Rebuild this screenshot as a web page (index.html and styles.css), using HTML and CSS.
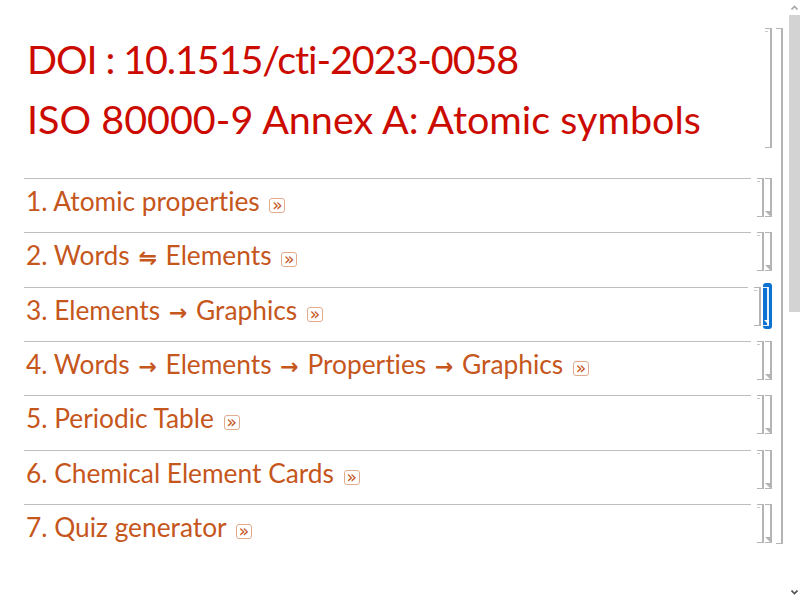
FILE: index.html
```html
<!DOCTYPE html>
<html lang="en">

<head>
  <meta charset="UTF-8" />
  <meta name="viewport" content="width=device-width, initial-scale=1.0" />
  <title>ISO 80000-9 Annex A: Atomic symbols</title>
  <link rel="stylesheet" href="styles.css">
</head>

<body>
  <div class="window">
    <div class="notebook">
      <div class="group">
        <div class="cells">

          <div class="cell title-cell">
            <div class="content">
              <div class="title doi">DOI : 10.1515/cti-2023-0058</div>
              <div class="title">ISO 80000-9 Annex A: Atomic symbols</div>
            </div>
            <span class="bracket-slot"></span>
            <span class="bracket cell-br"></span>
          </div>

          <div class="cell section">
            <div class="content">1. Atomic properties <span class="more">»</span></div>
            <span class="bracket cell-br"></span>
            <span class="bracket group-br"></span>
          </div>

          <div class="cell section">
            <div class="content">2. Words <span class="arrow">⇋</span> Elements <span class="more">»</span></div>
            <span class="bracket cell-br"></span>
            <span class="bracket group-br"></span>
          </div>

          <div class="cell section">
            <div class="content">3. Elements <span class="arrow">→</span> Graphics <span class="more">»</span></div>
            <span class="bracket cell-br"></span>
            <span class="bracket group-br selected"></span>
          </div>

          <div class="cell section">
            <div class="content">4. Words <span class="arrow">→</span> Elements <span class="arrow">→</span> Properties <span class="arrow">→</span> Graphics <span class="more">»</span></div>
            <span class="bracket cell-br"></span>
            <span class="bracket group-br"></span>
          </div>

          <div class="cell section">
            <div class="content">5. Periodic Table <span class="more">»</span></div>
            <span class="bracket cell-br"></span>
            <span class="bracket group-br"></span>
          </div>

          <div class="cell section">
            <div class="content">6. Chemical Element Cards <span class="more">»</span></div>
            <span class="bracket cell-br"></span>
            <span class="bracket group-br"></span>
          </div>

          <div class="cell section">
            <div class="content">7. Quiz generator <span class="more">»</span></div>
            <span class="bracket cell-br"></span>
            <span class="bracket group-br"></span>
          </div>

        </div>
        <span class="bracket outer-br"></span>
      </div>
    </div>

    <div class="scrollbar">
      <div class="sb-button">
        <svg width="7" height="5" viewBox="0 0 7 5"><polyline points="0.5,4.5 3.5,1.5 6.5,4.5" fill="none" stroke="#a8a8a8" stroke-width="1.6" /></svg>
      </div>
      <div class="sb-thumb"></div>
      <div class="sb-track"></div>
      <div class="sb-button">
        <svg width="7" height="5" viewBox="0 0 7 5"><polyline points="0.5,0.5 3.5,3.5 6.5,0.5" fill="none" stroke="#505050" stroke-width="1.6" /></svg>
      </div>
    </div>
  </div>
</body>

</html>
```

FILE: styles.css
```css
html {
  background: #fff;
}

body {
  margin: 0;
}

.window {
  display: flex;
  height: 600px;
  overflow: hidden;
}

.notebook {
  flex: 1;
  padding: 28px 6px 0 24px;
  font-family: Lato, "Open Sans", sans-serif;
  font-variant-ligatures: none;
}

.group {
  display: flex;
}

.cells {
  flex: 1;
}

.cell {
  display: flex;
}

.content {
  flex: 1;
}

/* title */
.title-cell {
  height: 120px;
}

.title-cell .content {
  padding: 1px 0 0 3px;
}

.title {
  color: #cc0b00;
  font-size: 39.5px;
  line-height: 60px;
  white-space: nowrap;
}

.title.doi {
  letter-spacing: -1.1px;
}

/* sections */
.section {
  height: 39px;
  margin-top: 15.33px;
}

.title-cell + .section {
  margin-top: 30px;
}

.section .content {
  border-top: 1px solid #bdbdbd;
  color: #c5561c;
  font-size: 26.3px;
  line-height: 38px;
  padding: 3px 0 0 2px;
  white-space: nowrap;
}

.arrow {
  margin: 0 2px;
  font-family: "DejaVu Sans", sans-serif;
  font-size: 22px;
  font-weight: bold;
}

.more {
  display: inline-flex;
  align-items: center;
  justify-content: center;
  box-sizing: border-box;
  width: 16px;
  height: 15px;
  margin-left: 3px;
  border: 1px solid #e3ab8c;
  border-radius: 3px;
  font-family: "DejaVu Sans", sans-serif;
  font-size: 17px;
  line-height: 1;
  color: #c5561c;
}

/* cell brackets */
.bracket,
.bracket-slot {
  position: relative;
  width: 5px;
  flex: none;
}

.bracket {
  border: 1px solid #b4b4b4;
  border-left: none;
  border-right-width: 2px;
}

.cell-br {
  margin-left: 6px;
}

.bracket-slot {
  margin-left: 6px;
  width: 7px;
}

.title-cell .cell-br {
  margin-left: 2px;
}

.cell-br::before {
  content: "";
  position: absolute;
  left: 0;
  top: 2px;
  width: 3px;
  border-top: 1px solid #c8c8c8;
}

.group-br {
  margin-left: 1px;
}

.group-br::after {
  content: "";
  position: absolute;
  right: 0;
  bottom: 0;
  border-left: 5px solid transparent;
  border-top: 5px solid #b4b4b4;
}

.group-br.selected {
  width: 9px;
  margin: -4px 0 -3px 2px;
  border: none;
  border-radius: 3px;
  background: #0b72d4;
}

.group-br.selected::before {
  content: "";
  position: absolute;
  left: 0;
  top: 4px;
  bottom: 3px;
  width: 4px;
  border: 1px solid #e6f0fa;
  border-left: none;
  border-right-width: 2px;
}

.group-br.selected::after {
  right: 3px;
  bottom: 4px;
  border-top-color: #fff;
}

.outer-br {
  margin-left: 4px;
  height: 514px;
}

/* scrollbar */
.scrollbar {
  width: 11px;
  display: flex;
  flex-direction: column;
  background: #fff;
}

.sb-button {
  height: 15px;
  display: flex;
  align-items: center;
  justify-content: center;
}

.sb-thumb {
  height: 297px;
  background: #d3d3d3;
}

.sb-track {
  flex: 1;
}
```
